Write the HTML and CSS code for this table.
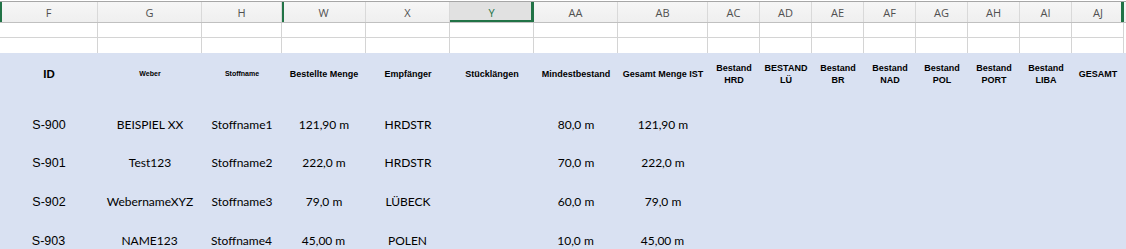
FILE: index.html
```html
<!DOCTYPE html>
<html lang="de">
<head>
<meta charset="utf-8">
<title>Sheet</title>
<link rel="stylesheet" href="styles.css">
</head>
<body>
<div class="sheet">
  <div class="row colhdr">
    <div class="c sel-left">F</div>
    <div class="c">G</div>
    <div class="c">H</div>
    <div class="c sel-left">W</div>
    <div class="c">X</div>
    <div class="c active">Y</div>
    <div class="c">AA</div>
    <div class="c">AB</div>
    <div class="c">AC</div>
    <div class="c">AD</div>
    <div class="c">AE</div>
    <div class="c">AF</div>
    <div class="c">AG</div>
    <div class="c">AH</div>
    <div class="c">AI</div>
    <div class="c sel-right">AJ</div>
  </div>
  <div class="row blank">
    <div class="c"></div><div class="c"></div><div class="c"></div><div class="c"></div>
    <div class="c"></div><div class="c"></div><div class="c"></div><div class="c"></div>
    <div class="c"></div><div class="c"></div><div class="c"></div><div class="c"></div>
    <div class="c"></div><div class="c"></div><div class="c"></div><div class="c"></div>
  </div>
  <div class="row blank">
    <div class="c"></div><div class="c"></div><div class="c"></div><div class="c"></div>
    <div class="c"></div><div class="c"></div><div class="c"></div><div class="c"></div>
    <div class="c"></div><div class="c"></div><div class="c"></div><div class="c"></div>
    <div class="c"></div><div class="c"></div><div class="c"></div><div class="c"></div>
  </div>
  <div class="table">
    <div class="row thead">
      <div class="c id">ID</div>
      <div class="c tiny">Weber</div>
      <div class="c tiny">Stoffname</div>
      <div class="c">Bestellte Menge</div>
      <div class="c">Empfänger</div>
      <div class="c">Stücklängen</div>
      <div class="c">Mindestbestand</div>
      <div class="c">Gesamt Menge IST</div>
      <div class="c">Bestand<br>HRD</div>
      <div class="c">BESTAND<br>LÜ</div>
      <div class="c">Bestand<br>BR</div>
      <div class="c">Bestand<br>NAD</div>
      <div class="c">Bestand<br>POL</div>
      <div class="c">Bestand<br>PORT</div>
      <div class="c">Bestand<br>LIBA</div>
      <div class="c">GESAMT</div>
    </div>
    <div class="row data">
      <div class="c sid">S-900</div><div class="c">BEISPIEL XX</div><div class="c">Stoffname1</div><div class="c">121,90 m</div>
      <div class="c">HRDSTR</div><div class="c"></div><div class="c">80,0 m</div><div class="c">121,90 m</div>
      <div class="c"></div><div class="c"></div><div class="c"></div><div class="c"></div>
      <div class="c"></div><div class="c"></div><div class="c"></div><div class="c"></div>
    </div>
    <div class="row data">
      <div class="c sid">S-901</div><div class="c">Test123</div><div class="c">Stoffname2</div><div class="c">222,0 m</div>
      <div class="c">HRDSTR</div><div class="c"></div><div class="c">70,0 m</div><div class="c">222,0 m</div>
      <div class="c"></div><div class="c"></div><div class="c"></div><div class="c"></div>
      <div class="c"></div><div class="c"></div><div class="c"></div><div class="c"></div>
    </div>
    <div class="row data">
      <div class="c sid">S-902</div><div class="c">WebernameXYZ</div><div class="c">Stoffname3</div><div class="c">79,0 m</div>
      <div class="c">LÜBECK</div><div class="c"></div><div class="c">60,0 m</div><div class="c">79,0 m</div>
      <div class="c"></div><div class="c"></div><div class="c"></div><div class="c"></div>
      <div class="c"></div><div class="c"></div><div class="c"></div><div class="c"></div>
    </div>
    <div class="row data last">
      <div class="c sid">S-903</div><div class="c">NAME123</div><div class="c">Stoffname4</div><div class="c">45,00 m</div>
      <div class="c">POLEN</div><div class="c"></div><div class="c">10,0 m</div><div class="c">45,00 m</div>
      <div class="c"></div><div class="c"></div><div class="c"></div><div class="c"></div>
      <div class="c"></div><div class="c"></div><div class="c"></div><div class="c"></div>
    </div>
  </div>
</div>
</body>
</html>
```

FILE: styles.css
```css
* { box-sizing: border-box; }
html, body { margin: 0; padding: 0; background: #ffffff; }
body { width: 1126px; height: 249px; overflow: hidden; }

.sheet {
  border-top: 1px solid #ffffff;
}

.row {
  display: grid;
  grid-template-columns: 98px 104px 80px 84px 84px 84px 84px 90px 52px 52px 52px 52px 52px 52px 52px 52px;
}

.c {
  display: flex;
  align-items: center;
  justify-content: center;
  text-align: center;
  min-width: 0;
}

/* column letters */
.colhdr {
  height: 22px;
  border-top: 1px solid #a6a6a6;
  background: linear-gradient(#f6f6f6, #efefef);
  border-bottom: 1px solid #c0c0c0;
  font-family: "Open Sans", "DejaVu Sans", sans-serif;
  font-size: 11px;
  color: #505050;
}
.colhdr .c {
  border-right: 1px solid #d9d9d9;
  padding-top: 1px;
}
.colhdr .sel-left { box-shadow: inset 2px 0 0 #217346; }
.colhdr .active {
  background: #e1e1e1;
  color: #217346;
  box-shadow: inset 0 -2px 0 #217346, inset -2px 0 0 #217346;
  border-right-color: #217346;
}
.colhdr .sel-right { box-shadow: inset -3px 0 0 #217346; border-right: none; }

.blank { height: 15px; }
.blank .c {
  border-right: 1px solid #d4d4d4;
  border-bottom: 1px solid #d4d4d4;
}
.blank + .blank .c { border-bottom: none; }

/* blue table */
.table {
  background: #d9e1f2;
  height: 197px;
  font-family: "Liberation Sans", Arial, sans-serif;
  color: #000;
}

.thead {
  height: 42px;
  font-weight: bold;
  font-size: 9px;
  line-height: 12px;
}
.thead .id { font-size: 11.5px; }
.thead .tiny { font-size: 7px; }

.data {
  height: 38.7px;
  font-family: "Lato", "Liberation Sans", sans-serif;
  font-size: 12px;
}
.data .c {
  align-items: flex-end;
  padding-bottom: 2px;
}
.data .sid {
  font-family: "Liberation Sans", Arial, sans-serif;
  font-size: 12.5px;
}
.data.last .c { border-right: 1px solid transparent; }
```
